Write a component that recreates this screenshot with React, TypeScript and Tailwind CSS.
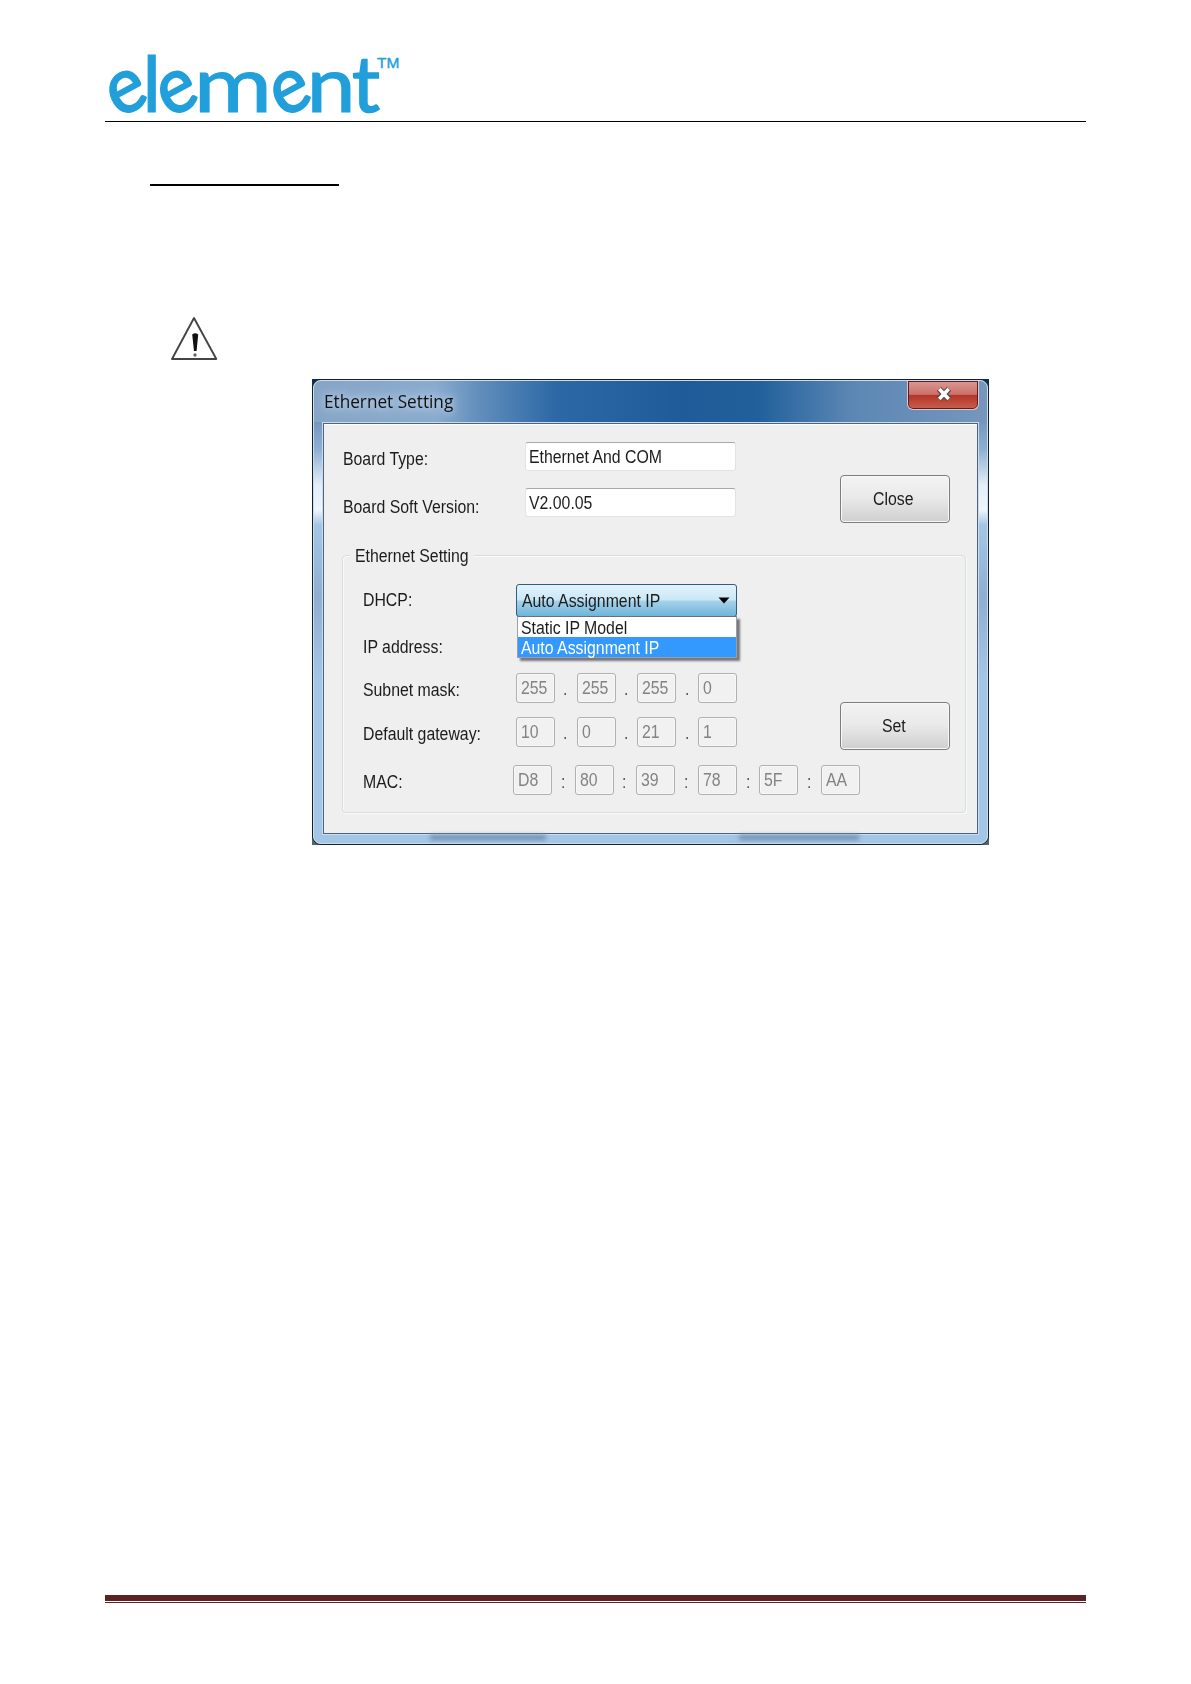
import clsx from 'clsx';
import type { ReactNode } from 'react';

const subnetMask = ['255', '255', '255', '0'];
const gateway = ['10', '0', '21', '1'];
const mac = ['D8', '80', '39', '78', '5F', 'AA'];

// Wordmark letters: centre, horizontal stretch, tilt and outline weight
const letters = [
  { char: 'e', x: 21.6, stretch: 0.9, tilt: -26, weight: 2 },
  { char: 'l', x: 46.8, stretch: 1, tilt: 0, weight: 1.2 },
  { char: 'e', x: 72.4, stretch: 0.9, tilt: -26, weight: 2 },
  { char: 'm', x: 128, stretch: 1.22, tilt: 0, weight: 1 },
  { char: 'e', x: 185.6, stretch: 0.9, tilt: -26, weight: 2 },
  { char: 'n', x: 226, stretch: 1.12, tilt: 0, weight: 1.2 },
  { char: 't', x: 261, stretch: 1, tilt: 0, weight: 1.6 },
];

// Slightly condensed dialog text
function Label({ children, className }: { children: ReactNode; className?: string }) {
  return (
    <span className={clsx('inline-block origin-left scale-x-[0.905] whitespace-nowrap text-[17.5px] leading-5', className)}>
      {children}
    </span>
  );
}

function Logo() {
  return (
    <svg className="block overflow-visible" width="310" height="66" viewBox="0 0 310 66" fill="#219fdb" textAnchor="middle">
      <g fontFamily="Lato, sans-serif" fontSize="78" stroke="#219fdb">
        {letters.map(({ char, x, stretch, tilt, weight }, i) => (
          <text key={i} y="19.5" strokeWidth={weight} transform={`translate(${x} 39.5) scale(${stretch} 1) rotate(${tilt})`}>
            {char}
          </text>
        ))}
      </g>
      <text x="283.2" y="14.6" fontFamily="Liberation Sans, sans-serif" fontSize="15.5" stroke="#219fdb" strokeWidth="0.4">
        TM
      </text>
    </svg>
  );
}

function WarningIcon() {
  return (
    <svg className="block" width="50" height="48" viewBox="0 0 50 48">
      <path d="M24 3 L46.3 44 H2 Z" fill="none" stroke="#444" strokeWidth="1.9" strokeLinejoin="round" />
      <path d="M22.2 19.5 Q25 17 28.2 19.5 L26.6 36 H24 Z" fill="#111" />
      <circle cx="25" cy="40" r="1.7" fill="#666" />
    </svg>
  );
}

function TextField({ label, value, labelClass }: { label: string; value: string; labelClass: string }) {
  return (
    <div className="flex h-[29px]">
      <div className={clsx('w-[182px]', labelClass)}>
        <Label>{label}</Label>
      </div>
      <div className="flex h-[29px] w-[211px] items-center rounded-[3px] border border-[#e2e3e6] border-t-[#a5a8ac] bg-white pl-[3px]">
        <Label>{value}</Label>
      </div>
    </div>
  );
}

function PushButton({ children }: { children: string }) {
  return (
    <button className="flex h-[48px] w-[110px] items-center justify-center rounded-[4px] border-[1.5px] border-[#7d7d7d] bg-linear-to-b from-[#f3f3f3] from-0% via-[#e9e9e9] via-48% to-[#cfcfcf] shadow-[inset_0_0_0_1px_#f8f8f8]">
      <Label className="origin-center">{children}</Label>
    </button>
  );
}

function Octets({ values, separator }: { values: string[]; separator: string }) {
  return (
    <div className="flex h-[30px] shrink-0">
      {values.map((value, i) => (
        <div key={i} className="flex">
          <div className="flex h-[30px] w-[39px] items-center rounded-[3px] border border-[#b0b0b0] bg-[#f1f1f1] pl-[4px] text-[#838383] shadow-[inset_0_0_0_1px_#f8f8f8]">
            <Label>{value}</Label>
          </div>
          {i < values.length - 1 && (
            <div className={clsx('text-center text-[#555]', separator === '.' ? 'w-[21.7px] pt-[5px]' : 'w-[22.6px] pt-[6px]')}>
              <Label>{separator}</Label>
            </div>
          )}
        </div>
      ))}
    </div>
  );
}

function TitleBar() {
  return (
    <div className="flex h-[41px] justify-between">
      <div className="pl-[10px] pt-[8px]">
        <span className="inline-block origin-left scale-x-[0.955] whitespace-nowrap font-['Open_Sans',sans-serif] text-[18px] leading-[25px] text-[#111] [text-shadow:0_0_8px_#c5d8ec,0_0_14px_#c5d8ec]">
          Ethernet Setting
        </span>
      </div>
      <div className="mr-[8px] flex h-[29px] w-[72px] items-center justify-center rounded-b-[6px] border border-t-0 border-[#d9c6cb] bg-[linear-gradient(#dc9892,#cb706a_48%,#b33426_50%,#c8604e)] shadow-[inset_0_0_0_1px_#5e1d22]">
        <svg className="mb-[2px] ml-[2px]" width="18" height="16" viewBox="0 0 18 16">
          <path d="M4 3 L14 13 M14 3 L4 13" stroke="#54424c" strokeWidth="6" />
          <path d="M4.3 3 L13.7 13 M13.7 3 L4.3 13" stroke="#fff" strokeWidth="3.6" />
        </svg>
      </div>
    </div>
  );
}

function DhcpSelect() {
  return (
    <div className="relative">
      <div className="flex h-[33px] w-[221px] items-center justify-between rounded-[3px] border-[1.5px] border-[#2f5f80] bg-[linear-gradient(#e3f3fc,#c9e7f6_49%,#a6d3ea_51%,#6fb4d9)] pl-[5px] pr-[6px]">
        <Label>Auto Assignment IP</Label>
        <svg width="12" height="7" viewBox="0 0 12 7">
          <path d="M0.5 0.5 H11.5 L6 6.5 Z" fill="#000" />
        </svg>
      </div>
      <div className="absolute left-px top-[32px] z-10 w-[220px] border border-[#98a0ac] border-t-[#687078] bg-white shadow-[3px_3px_2px_#77777c]">
        <div className="h-[20px] pl-[3px]">
          <Label className="block">Static IP Model</Label>
        </div>
        <div className="h-[20px] bg-[#3399ff] pl-[3px] text-white">
          <Label className="block">Auto Assignment IP</Label>
        </div>
      </div>
    </div>
  );
}

function EthernetGroup() {
  return (
    <div className="ml-[18px] mr-[11px] h-[258px] rounded-[4px] border border-[#d5dfe0] shadow-[inset_1px_1px_0_#fafafa,1px_1px_0_#fafafa]">
      <div className="-mt-[11px] ml-[7px] h-[22px] w-[124px] bg-[#efefef] pl-[5px]">
        <Label>Ethernet Setting</Label>
      </div>
      <div className="flex">
        <div className="w-[497px] shrink-0 pl-[20px] pt-[17px]">
          <div className="flex h-[33px] items-center">
            <div className="w-[153px] shrink-0">
              <Label>DHCP:</Label>
            </div>
            <DhcpSelect />
          </div>
          <div className="h-[56px] pt-[19px]">
            <Label>IP address:</Label>
          </div>
          <div className="flex h-[30px]">
            <div className="w-[153px] shrink-0 pt-[6px]">
              <Label>Subnet mask:</Label>
            </div>
            <Octets values={subnetMask} separator="." />
          </div>
          <div className="mt-[14px] flex h-[30px]">
            <div className="w-[153px] shrink-0 pt-[6px]">
              <Label>Default gateway:</Label>
            </div>
            <Octets values={gateway} separator="." />
          </div>
          <div className="mt-[18px] flex h-[30px]">
            <div className="w-[150px] shrink-0 pt-[6px]">
              <Label>MAC:</Label>
            </div>
            <Octets values={mac} separator=":" />
          </div>
        </div>
        <div className="pt-[135px]">
          <PushButton>Set</PushButton>
        </div>
      </div>
    </div>
  );
}

function EthernetDialog() {
  return (
    <div className="h-[466px] w-[677px] bg-[linear-gradient(#0b2f57,#12395f_60%,#55646a)]">
      <div className="h-[466px] rounded-[9px] border border-[#14202c] bg-[linear-gradient(#7396be_40px,#8fb0d3_70px,#e4eef8_105px,#eef5fb_130px,#a5c5e4_145px,#9cbfe1_170px,#8eaed2_215px,#a4c6e6_300px,#a4c6e6)]">
        <div className="flex h-[464px] flex-col rounded-[8px] border border-[#cbdceb] bg-[linear-gradient(90deg,#87a5c6,#8aabcd_18%,#5f8cbb_25%,#2c68a5_36%,#1f5b98_55%,#21609b_66%,#5c87b4_80%,#7696bd)] bg-[length:100%_41px] bg-no-repeat">
          <TitleBar />
          <div className="mx-[8px] h-[413px] border border-[#cadced]">
            <div className="h-[411px] border border-[#50637e] bg-[#efefef] shadow-[inset_0_1px_0_#fff]">
              <div className="flex h-[131px] pl-[19px] pt-[18px]">
                <div className="flex flex-col gap-[17px]">
                  <TextField label="Board Type:" value="Ethernet And COM" labelClass="pt-[6px]" />
                  <TextField label="Board Soft Version:" value="V2.00.05" labelClass="pt-[8px]" />
                </div>
                <div className="pl-[104px] pt-[33px]">
                  <PushButton>Close</PushButton>
                </div>
              </div>
              <EthernetGroup />
            </div>
          </div>
          {/* Blurred shapes of the window behind the glass frame */}
          <div className="flex h-[7px] pl-[116px]">
            <div className="h-[5px] w-[116px] bg-[#7391b0] blur-[2px]" />
            <div className="ml-[193px] h-[5px] w-[120px] bg-[#7391b0] blur-[2px]" />
          </div>
        </div>
      </div>
    </div>
  );
}

export default function App() {
  return (
    <div className="flex h-[1684px] w-[1191px] flex-col bg-white px-[105px] font-['Liberation_Sans',Arial,sans-serif] text-[#1c1c1c]">
      <header className="h-[122px] w-[981px] border-b border-black pt-[53px]">
        <Logo />
      </header>
      <div className="ml-[45px] mt-[62px] h-[2px] w-[189px] bg-black" />
      <div className="ml-[65px] mt-[129px] h-[64px]">
        <WarningIcon />
      </div>
      <main className="ml-[207px]">
        <EthernetDialog />
      </main>
      <footer className="mt-auto w-[981px] pb-[81px]">
        <div className="h-[6px] bg-[#5b2424]" />
        <div className="mt-px h-px bg-[#5b2424]" />
      </footer>
    </div>
  );
}
